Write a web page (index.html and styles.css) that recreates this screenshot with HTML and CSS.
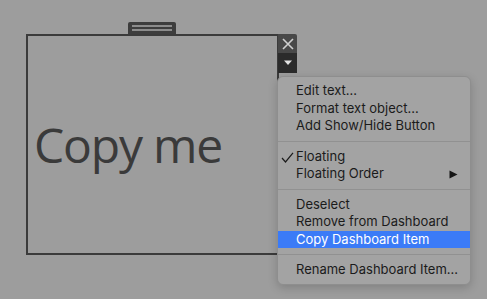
FILE: index.html
```html
<!DOCTYPE html>
<html lang="en">
<head>
    <meta charset="UTF-8">
    <title>Dashboard Item Menu</title>
    <link rel="stylesheet" href="styles.css">
</head>
<body>
<div class="canvas">
    <div class="dash-item">
        <div class="grip"><span></span><span></span></div>
        <div class="item-text">Copy me</div>

        <div class="item-tools">
            <button class="tool-btn close-btn">
                <svg width="12" height="12" viewBox="0 0 12 12"><path d="M1 1 L11 11 M11 1 L1 11" stroke="#cfcfcf" stroke-width="1.6"/></svg>
            </button>
            <button class="tool-btn menu-btn">
                <svg width="10" height="6" viewBox="0 0 10 6"><path d="M1 0.5 H9 L5 5 Z" fill="#e2e2e2"/></svg>
            </button>
        </div>
    </div>
</div>

<ul class="context-menu">
    <li class="menu-row">Edit text...</li>
    <li class="menu-row">Format text object...</li>
    <li class="menu-row">Add Show/Hide Button</li>
    <li class="menu-sep"></li>
    <li class="menu-row">
        <svg class="check" width="13" height="11" viewBox="0 0 13 11"><path d="M1 6 L4.5 10 L12 0.8" fill="none" stroke="#1b1b1b" stroke-width="1.2"/></svg>
        Floating
    </li>
    <li class="menu-row">
        Floating Order
        <svg class="sub-arrow" width="9" height="9" viewBox="0 0 9 9"><path d="M0.5 0.5 L8.5 4.5 L0.5 8.5 Z" fill="#151515"/></svg>
    </li>
    <li class="menu-sep"></li>
    <li class="menu-row">Deselect</li>
    <li class="menu-row">Remove from Dashboard</li>
    <li class="menu-row active">Copy Dashboard Item</li>
    <li class="menu-sep"></li>
    <li class="menu-row">Rename Dashboard Item...</li>
</ul>
</body>
</html>
```

FILE: styles.css
```css
/* Page */
body {
    margin: 0;
    background-color: #9d9d9d;
    font-family: 'Inter', 'Liberation Sans', sans-serif;
    height: 299px;
    overflow: hidden;
    position: relative;
}

.canvas {
    padding: 34px 0 0 26px;
}

/* Dashboard item */
.dash-item {
    position: relative;
    width: 253px;
    height: 221px;
    border: 2px solid #3b3b3b;
    box-sizing: border-box;
}

.grip {
    position: absolute;
    top: -14px;
    left: 100px;
    width: 48px;
    height: 12px;
    background-color: #3d3d3d;
    border-radius: 2px 2px 0 0;
    display: flex;
    flex-direction: column;
    justify-content: center;
    gap: 2px;
    padding: 0 4px;
    box-sizing: border-box;
}

.grip span {
    display: block;
    height: 2px;
    background-color: #8c8c8c;
}

.item-text {
    font-family: 'Open Sans', sans-serif;
    font-size: 48px;
    color: #3a3a3a;
    padding: 85px 0 0 6px;
    line-height: 1;
    letter-spacing: -1.2px;
}

.item-tools {
    position: absolute;
    top: -2px;
    left: 250px;
    display: flex;
    flex-direction: column;
}

.tool-btn {
    width: 19px;
    height: 19px;
    border: none;
    padding: 0;
    margin: 0;
    display: flex;
    align-items: center;
    justify-content: center;
}

.close-btn {
    background-color: #484848;
    border-radius: 0 2px 0 0;
}

.menu-btn {
    background-color: #2b2b2b;
    height: 20px;
}

/* Context menu */
.context-menu {
    position: absolute;
    top: 76px;
    left: 277px;
    width: 194px;
    margin: 0;
    padding: 5px 0;
    list-style: none;
    background-color: #a3a3a3;
    border: 1px solid #8e8e8e;
    border-radius: 6px;
    box-shadow: 0 3px 10px rgba(0, 0, 0, 0.18);
    box-sizing: border-box;
    font-size: 13px;
    color: #1b1b1b;
}

.menu-row {
    position: relative;
    height: 17.5px;
    line-height: 17.5px;
    padding-left: 18px;
    white-space: nowrap;
}

.menu-row.active {
    background-color: #3b7bf7;
    color: #fff;
}

.check {
    position: absolute;
    left: 3px;
    top: 4px;
}

.sub-arrow {
    position: absolute;
    right: 12px;
    top: 5px;
}

.menu-sep {
    height: 1px;
    background-color: #919191;
    margin: 6px 0 6px;
}
```
